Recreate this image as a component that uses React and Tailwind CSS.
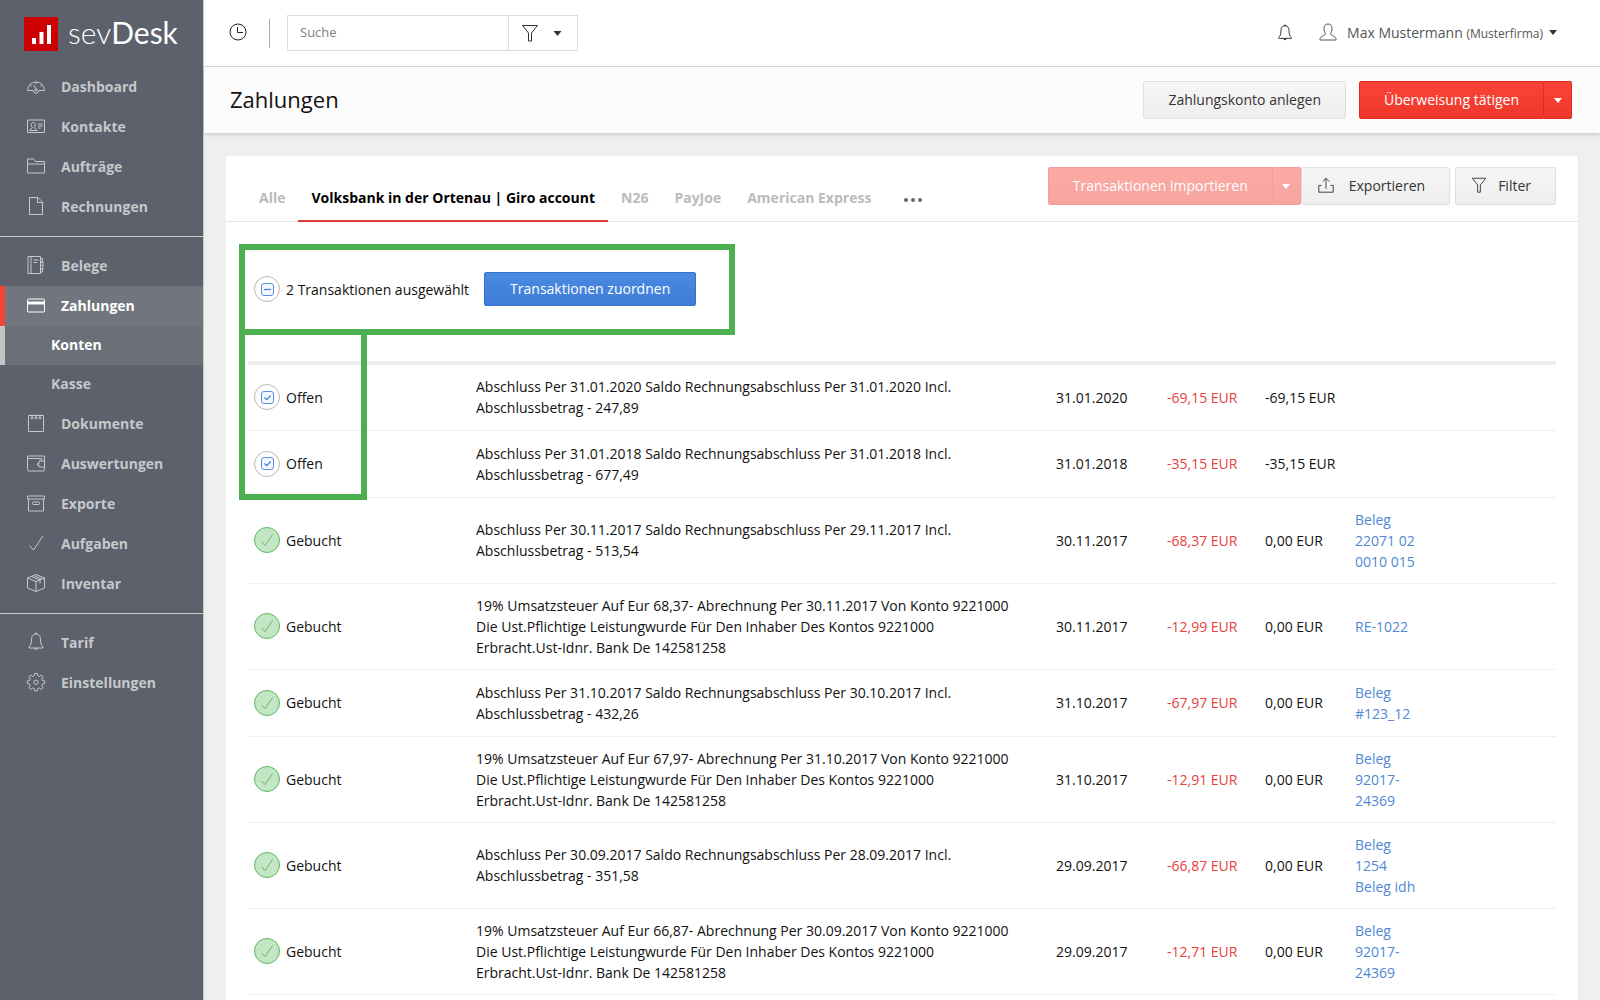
import { useState } from "react";
import clsx from "clsx";

// thin line icons, all drawn on a 20x20 grid
const icons = {
  gauge: (
    <>
      <path d="M1.5 14.5a8.5 8.5 0 0 1 17 0h-5.7a2.8 2.8 0 0 1-5.6 0z" />
      <path d="M10 5.8v2M4.2 9.2l1.5 1M15.8 9.2l-1.5 1M8.2 9l1.5 4" />
      <circle cx="10" cy="14" r="1.2" />
    </>
  ),
  contact: (
    <>
      <path d="M1.5 4h17v12.5h-17z" />
      <path d="M3.5 14.5c0-1.8 2.8-1.6 2.8-3-.8-.7-1-1.6-1-2.7 0-1.5.8-2.3 2-2.3s2 .8 2 2.3c0 1.1-.2 2-1 2.7 0 1.4 2.8 1.200 2.800 3zM12 8h4.500M12 10h4.500M12 12h2.500" />
    </>
  ),
  folder: <path d="M1.500 17V3h6l2 2.500h9V17zM1.500 8h17" />,
  file: <path d="M3.500 1.500h8.500l4.500 4.500v12.500h-13zM11.500 1.500v5h5" />,
  book: (
    <>
      <path d="M2 1.500h12.500v17H2zM5 1.500v17M7.500 5h5M7.500 7.500h3.500" />
      <path d="M14.500 3.500h2v3.500h-2M14.500 7h2.500v3.500h-2.500M14.500 10.500h2.500V14h-2.500M14.500 14h2v3h-2" />
    </>
  ),
  card: (
    <>
      <path d="M2.500 4h15q1 0 1 1v11q0 1-1 1h-15q-1 0-1-1V5q0-1 1-1z" />
      <path d="M1.500 8h17" strokeWidth="3" />
    </>
  ),
  notepad: (
    <>
      <path d="M2.500 2.500h15v16h-15z" />
      <circle cx="6" cy="5" r="1" />
      <circle cx="10" cy="5" r="1" />
      <circle cx="14" cy="5" r="1" />
      <path d="M6 1.500V4M10 1.500V4M14 1.500V4" />
    </>
  ),
  wallet: (
    <path d="M18.500 8V3h-17v13.500q0 1.500 1.500 1.500h14q1.500 0 1.500-1.500V14M1.500 5.500h14V8M18.500 8H13v2.500h-1.500V12H13v2h5.500z" />
  ),
  archive: (
    <path d="M1.500 3h17v3h-17zM2.500 6v12h15V6M7.500 9h5q1 0 1 1v.5q0 1-1 1h-5q-1 0-1-1V10q0-1 1-1z" />
  ),
  check: <path d="M3.500 12.500l4 4.500L17 3" />,
  box: (
    <path d="M10 1.500l8.500 3.500v10L10 18.500 1.500 15V5zM1.500 5L10 8.500 18.500 5M10 8.500v10M5.500 3.500L14 7v3.500M7.500 2.500L16 6" />
  ),
  bell: (
    <path d="M10 2c-3.300 0-4.500 2.500-4.500 5.500 0 4-1 6-2.500 7.500v1h14v-1c-1.500-1.500-2.500-3.500-2.500-7.500C14.500 4.500 13.300 2 10 2zM9 2q0-1 1-1t1 1M8.500 16q0 1.500 1.500 1.500t1.500-1.500" />
  ),
  gear: (
    <>
      <path d="M8.700 1.500h2.600l.5 2.300 1.500.6 2-1.300 1.800 1.800-1.300 2 .6 1.500 2.300.5v2.600l-2.300.5-.6 1.500 1.300 2-1.800 1.800-2-1.300-1.500.6-.5 2.300H8.700l-.5-2.300-1.500-.6-2 1.300-1.800-1.800 1.300-2-.6-1.500-2.300-.5V8.900l2.300-.5.6-1.500-1.300-2 1.800-1.800 2 1.300 1.500-.6z" />
      <circle cx="10" cy="10.200" r="2.200" />
    </>
  ),
  clock: (
    <>
      <circle cx="10" cy="10" r="8" />
      <path d="M9.500 5v5.500H15" />
    </>
  ),
  funnel: <path d="M2.500 2.500h15L11.500 10v8h-3v-8z" />,
  user: (
    <path d="M2 18v-1.500c0-2 5.500-2.500 5.500-5C6.500 10 6 9 6 6.500 6 3.500 7.500 2 10 2s4 1.500 4 4.500c0 2.500-.5 3.500-1.500 5 0 2.500 5.500 3 5.500 5V18z" />
  ),
  upload: <path d="M5 10.500H2v7.500h16v-7.500h-3M10 14V2.500M6.500 6L10 2.500 13.500 6" />,
};

function Icon({ name, className = "size-5" }) {
  return (
    <svg
      className={clsx("shrink-0", className)}
      viewBox="0 0 20 20"
      fill="none"
      stroke="currentColor"
      strokeWidth="1"
      aria-hidden="true"
    >
      {icons[name]}
    </svg>
  );
}

function Caret({ className = "w-2" }) {
  return (
    <svg className={clsx("h-[5px]", className)} viewBox="0 0 8 5" fill="currentColor" aria-hidden="true">
      <path d="M0 0h8L4 5z" />
    </svg>
  );
}

const navGroups = [
  [
    { label: "Dashboard", icon: "gauge" },
    { label: "Kontakte", icon: "contact" },
    { label: "Aufträge", icon: "folder" },
    { label: "Rechnungen", icon: "file" },
  ],
  [
    { label: "Belege", icon: "book" },
    { label: "Zahlungen", icon: "card", active: true },
    { label: "Konten", sub: true, active: true },
    { label: "Kasse", sub: true },
    { label: "Dokumente", icon: "notepad" },
    { label: "Auswertungen", icon: "wallet" },
    { label: "Exporte", icon: "archive" },
    { label: "Aufgaben", icon: "check" },
    { label: "Inventar", icon: "box" },
  ],
  [
    { label: "Tarif", icon: "bell" },
    { label: "Einstellungen", icon: "gear" },
  ],
];

const tabs = ["Alle", "Volksbank in der Ortenau | Giro account", "N26", "PayJoe", "American Express"];

const closing = (date, saldoDate, amount) =>
  `Abschluss Per ${date} Saldo Rechnungsabschluss Per ${saldoDate} Incl. Abschlussbetrag - ${amount}`;

const vat = (amount, date) =>
  `19% Umsatzsteuer Auf Eur ${amount}- Abrechnung Per ${date} Von Konto 9221000 Die Ust.Pflichtige Leistungwurde Für Den Inhaber Des Kontos 9221000 Erbracht.Ust-Idnr. Bank De 142581258`;

const transactions = [
  { id: 1, open: true, text: closing("31.01.2020", "31.01.2020", "247,89"), date: "31.01.2020", amount: "-69,15 EUR", rest: "-69,15 EUR", links: [] },
  { id: 2, open: true, text: closing("31.01.2018", "31.01.2018", "677,49"), date: "31.01.2018", amount: "-35,15 EUR", rest: "-35,15 EUR", links: [] },
  { id: 3, text: closing("30.11.2017", "29.11.2017", "513,54"), date: "30.11.2017", amount: "-68,37 EUR", rest: "0,00 EUR", links: ["Beleg 22071 02 0010 015"] },
  { id: 4, text: vat("68,37", "30.11.2017"), date: "30.11.2017", amount: "-12,99 EUR", rest: "0,00 EUR", links: ["RE-1022"] },
  { id: 5, text: closing("31.10.2017", "30.10.2017", "432,26"), date: "31.10.2017", amount: "-67,97 EUR", rest: "0,00 EUR", links: ["Beleg #123_12"] },
  { id: 6, text: vat("67,97", "31.10.2017"), date: "31.10.2017", amount: "-12,91 EUR", rest: "0,00 EUR", links: ["Beleg 92017-24369"] },
  { id: 7, text: closing("30.09.2017", "28.09.2017", "351,58"), date: "29.09.2017", amount: "-66,87 EUR", rest: "0,00 EUR", links: ["Beleg 1254", "Beleg idh"] },
  { id: 8, text: vat("66,87", "30.09.2017"), date: "29.09.2017", amount: "-12,71 EUR", rest: "0,00 EUR", links: ["Beleg 92017-24369"] },
];

function NavItem({ label, icon, sub, active }) {
  return (
    <a
      href="#"
      className={clsx(
        "flex items-center gap-[15px] border-l-5 pb-[2px]",
        sub ? "h-[39px] pl-[46px]" : "h-10 pl-[21px]",
        active ? "text-white" : "border-transparent text-[#c6c8cb]",
        active && (sub ? "border-[#c4c4c4] bg-[#6a6f78]" : "border-[#f44336] bg-[#70757e]")
      )}
    >
      {icon && <Icon name={icon} />}
      {label}
    </a>
  );
}

function Sidebar() {
  return (
    <aside className="w-[204px] shrink-0 border-r border-[#c8cacd] bg-[#5c616b]">
      <a href="#" className="flex h-[67px] items-center gap-[10px] pl-6 text-white">
        <svg className="size-[34px]" viewBox="0 0 34 34" aria-hidden="true">
          <path fill="#cc0000" d="M0 0h34v34H0z" />
          <path fill="#fff" d="M8 21h4v6H8zM15.500 15h4v12h-4zM23 8h4v19h-4z" />
        </svg>
        <span className="pb-1 font-[Lato] text-[30px] leading-8 font-light">
          sev<span className="font-normal">Desk</span>
        </span>
      </a>
      <nav className="text-[14px] font-bold">
        {navGroups.map((group, i) => (
          <div key={i} className={clsx("pb-[9px]", i > 0 && "border-t border-[#c8cacd] pt-[9px]")}>
            {group.map((item) => (
              <NavItem key={item.label} {...item} />
            ))}
          </div>
        ))}
      </nav>
    </aside>
  );
}

function TopBar() {
  return (
    <header className="flex h-[67px] items-center border-b border-[#dedede] bg-white pr-[43px] pl-6">
      <button type="button" aria-label="Verlauf" className="pb-[2px] text-[#222]">
        <Icon name="clock" />
      </button>
      <div className="ml-[21px] h-[29px] w-px bg-[#b0b0b0]" />
      <form className="ml-[17px] flex h-9 border border-[#dcdcdc]">
        <input
          type="search"
          aria-label="Suche"
          placeholder="Suche"
          className="w-[220px] px-3 text-[13px] text-[#333] outline-none placeholder:text-[#808080]"
        />
        <button
          type="button"
          aria-label="Suchfilter"
          className="flex w-[69px] items-center gap-[13px] border-l border-[#dcdcdc] pl-[11px] text-[#333]"
        >
          <Icon name="funnel" />
          <Caret className="w-[9px]" />
        </button>
      </form>
      <button type="button" aria-label="Benachrichtigungen" className="ml-auto text-[#222]">
        <Icon name="bell" className="size-[18px]" />
      </button>
      <button type="button" className="ml-6 flex items-center pb-[2px] text-[14px] text-[#555]">
        <Icon name="user" />
        <span className="ml-[9px]">
          Max Mustermann <span className="text-[12px]">(Musterfirma)</span>
        </span>
        <Caret className="ml-[6px] w-2 text-[#333]" />
      </button>
    </header>
  );
}

const lightButton =
  "flex h-[38px] items-center rounded-xs border border-[#dfdfdf] bg-linear-to-b from-[#f6f6f6] to-[#eeeeee] pb-[2px] text-[14px] text-[#333]";

function SplitButton({ label, disabled }) {
  return (
    <div className={clsx("flex h-[38px] text-[14px] text-white", disabled && "opacity-45")}>
      <button
        type="button"
        disabled={disabled}
        className="rounded-l-xs border border-[#e02d20] bg-linear-to-b from-[#fa4437] to-[#ee372b] px-6 pb-[2px]"
      >
        {label}
      </button>
      <button
        type="button"
        disabled={disabled}
        aria-label={`${label}: weitere Optionen`}
        className="flex w-7 items-center justify-center rounded-r-xs border border-l-0 border-[#e02d20] bg-linear-to-b from-[#fa4437] to-[#ee372b]"
      >
        <Caret />
      </button>
    </div>
  );
}

function StatusCheckbox({ label, checked, partial, onChange }) {
  return (
    <label className="flex items-center gap-[6px]">
      <span className="grid size-[26px] place-items-center rounded-full border border-[#bdb8b3] bg-white">
        <input
          type="checkbox"
          checked={checked}
          onChange={onChange}
          className="col-start-1 row-start-1 size-[13px] appearance-none rounded-[3px] border border-[#5b8ee0] bg-[#f3f8ff]"
        />
        {checked && (
          <svg
            className="pointer-events-none col-start-1 row-start-1 size-[13px] text-[#3f7fdc]"
            viewBox="0 0 13 13"
            fill="none"
            stroke="currentColor"
            strokeWidth="1.200"
            aria-hidden="true"
          >
            <path d={partial ? "M3 6.500h7" : "M3.500 6.500l2.200 2.200 4-4.200"} />
          </svg>
        )}
      </span>
      {label}
    </label>
  );
}

function TransactionRow({ item, checked, onToggle }) {
  return (
    <tr className="h-[67px] border-b border-[#efefef]">
      <td className="pl-[6px]">
        {item.open ? (
          <StatusCheckbox label="Offen" checked={checked} onChange={onToggle} />
        ) : (
          <div className="flex items-center gap-[6px]">
            <span className="grid size-[26px] place-items-center rounded-full border border-[#5cb860] bg-[#c3e6c4] text-[#4caf50]">
              <Icon name="check" className="size-4" />
            </span>
            Gebucht
          </div>
        )}
      </td>
      <td className="py-[11px] pr-9">{item.text}</td>
      <td>{item.date}</td>
      <td className="text-[#e8403a]">{item.amount}</td>
      <td>{item.rest}</td>
      <td className="py-[11px]">
        <div className="w-[66px]">
          {item.links.map((link) => (
            <a key={link} href="#" className="block text-[#5088d4]">
              {link}
            </a>
          ))}
        </div>
      </td>
    </tr>
  );
}

export default function App() {
  const [tab, setTab] = useState(tabs[1]);
  const [selected, setSelected] = useState([1, 2]);

  const toggle = (id) =>
    setSelected((ids) => (ids.includes(id) ? ids.filter((x) => x !== id) : [...ids, id]));

  return (
    <div className="flex h-screen overflow-hidden bg-[#efefef] font-['Open_Sans',sans-serif] text-[14px] text-[#111]">
      <Sidebar />
      <div className="min-w-0 flex-1">
        <TopBar />

        <div className="flex h-[66px] items-center gap-[13px] bg-[#fcfcfc] pr-7 pl-[26px] shadow-[0_1px_4px_rgba(0,0,0,0.2)]">
          <h1 className="mr-auto pb-[2px] text-[22px]">Zahlungen</h1>
          <button type="button" className={clsx(lightButton, "px-6")}>
            Zahlungskonto anlegen
          </button>
          <SplitButton label="Überweisung tätigen" />
        </div>

        <main className="mt-[23px] mr-[21px] ml-[22px] min-h-screen border-r border-[#e6e6e6] bg-white">
          <div className="flex h-[66px] border-b border-[#e4e4e4] pr-[22px] pl-5">
            <div role="tablist" className="flex flex-1 items-end font-bold">
              {tabs.map((name) => (
                <button
                  key={name}
                  type="button"
                  role="tab"
                  aria-selected={tab === name}
                  onClick={() => setTab(name)}
                  className={clsx(
                    "-mb-px h-[46px] border-b-2 px-[13px] pb-[2px] whitespace-nowrap",
                    tab === name ? "border-[#e53935] text-black" : "border-transparent text-[#bbb]"
                  )}
                >
                  {name}
                </button>
              ))}
              <button type="button" aria-label="Weitere Konten" className="ml-5 flex h-[42px] items-center text-[#666]">
                <svg className="h-1 w-[18px]" viewBox="0 0 18 4" fill="currentColor" aria-hidden="true">
                  <circle cx="2" cy="2" r="2" />
                  <circle cx="9" cy="2" r="2" />
                  <circle cx="16" cy="2" r="2" />
                </svg>
              </button>
            </div>
            <div className="mt-[11px] flex">
              <SplitButton label="Transaktionen importieren" disabled />
              <button type="button" className={clsx(lightButton, "gap-[14px] pr-6 pl-[15px]")}>
                <Icon name="upload" className="size-[18px]" />
                Exportieren
              </button>
              <button type="button" className={clsx(lightButton, "ml-[5px] gap-[10px] pr-6 pl-[14px]")}>
                <Icon name="funnel" className="size-[18px]" />
                Filter
              </button>
            </div>
          </div>

          <div className="relative px-[22px]">
            <div className="mb-[5px] flex h-[134px] items-center gap-[15px] pl-[6px]">
              <StatusCheckbox
                label={`${selected.length} Transaktionen ausgewählt`}
                checked={selected.length > 0}
                partial
                onChange={() => setSelected([])}
              />
              <button
                type="button"
                className="h-[34px] rounded-xs border border-[#3673cb] bg-linear-to-b from-[#4a8ae0] to-[#3f7dd8] px-[25px] pb-[2px] text-white"
              >
                Transaktionen zuordnen
              </button>
            </div>

            <table className="w-full table-fixed border-collapse border-t-4 border-[#ececec] text-left leading-[21px]">
              <colgroup>
                <col className="w-[228px]" />
                <col className="w-[580px]" />
                <col className="w-[111px]" />
                <col className="w-[98px]" />
                <col className="w-[90px]" />
                <col />
              </colgroup>
              <tbody>
                {transactions.map((item) => (
                  <TransactionRow
                    key={item.id}
                    item={item}
                    checked={selected.includes(item.id)}
                    onToggle={() => toggle(item.id)}
                  />
                ))}
              </tbody>
            </table>

            {/* highlight frames over the selection bar and the open rows */}
            <div className="pointer-events-none absolute top-[22px] left-[13px] h-[91px] w-[496px] border-6 border-[#4caf50]" />
            <div className="pointer-events-none absolute top-[107px] left-[13px] h-[171px] w-[128px] border-6 border-[#4caf50]" />
          </div>
        </main>
      </div>
    </div>
  );
}
